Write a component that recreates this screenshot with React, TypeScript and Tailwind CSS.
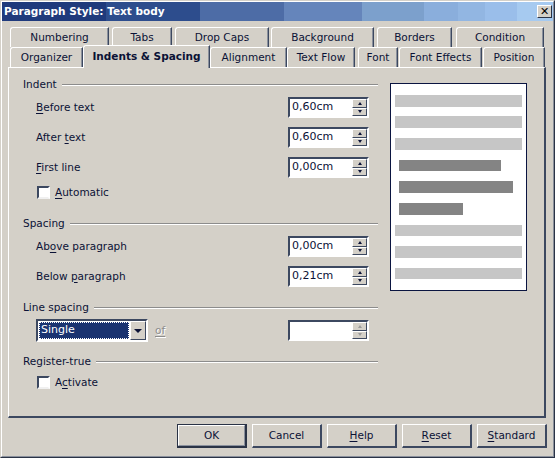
import React from 'react';

const ink = 'text-[#0b1236]';

function U({ children }: { children: React.ReactNode }) {
  return <span className="underline underline-offset-2 decoration-1">{children}</span>;
}

function Tab({ label, className }: { label: string; className: string }) {
  return (
    <div
      className={`h-[20px] shrink-0 flex items-center justify-center border-t border-l border-white border-r border-r-[#3c4860] rounded-tl-[3px] shadow-[inset_-1px_0_0_#8a909c] ${className}`}
    >
      {label}
    </div>
  );
}

function SectionHead({ title }: { title: string }) {
  return (
    <div className="h-[13px] flex items-center gap-[5px]">
      <span className="leading-none">{title}</span>
      <div className="flex-1 h-0 border-t border-[#8c8c8c] border-b border-b-white" />
    </div>
  );
}

function Arrow({ up, disabled }: { up?: boolean; disabled?: boolean }) {
  const c = disabled ? 'border-[#9a9a9a]' : 'border-[#0b1236]';
  return (
    <div className="flex-1 bg-[#d4d0c8] border border-white border-r-[#3c4860] border-b-[#3c4860] flex items-center justify-center">
      <div
        className={
          up
            ? `w-0 h-0 border-x-[2.5px] border-x-transparent border-b-[3px] border-t-0 ${c}`
            : `w-0 h-0 border-x-[2.5px] border-x-transparent border-t-[3px] border-b-0 ${c}`
        }
      />
    </div>
  );
}

function Spin({ value, disabled }: { value?: string; disabled?: boolean }) {
  return (
    <div className="w-[81px] h-[21px] shrink-0 flex border-2 border-t-[#3c4860] border-l-[#3c4860] border-r-white border-b-white bg-white">
      <div className="flex-1 pl-[2px] flex items-center text-[11px]">{value}</div>
      <div className="w-[15px] flex flex-col">
        <Arrow up disabled={disabled} />
        <Arrow disabled={disabled} />
      </div>
    </div>
  );
}

function Field({ label, value }: { label: React.ReactNode; value: string }) {
  return (
    <div className="flex items-center h-[21px]">
      <div className="w-[265px] pl-[13px]">{label}</div>
      <Spin value={value} />
    </div>
  );
}

function Check({ label }: { label: React.ReactNode }) {
  return (
    <div className="flex items-center h-[13px] pl-[14px] gap-[5px]">
      <div className="w-[13px] h-[13px] bg-white border-2 border-t-[#3c4860] border-l-[#3c4860] border-r-white border-b-[#f0f0f0]" />
      <span>{label}</span>
    </div>
  );
}

function Btn({ children, def }: { children: React.ReactNode; def?: boolean }) {
  if (def) {
    return (
      <div className="w-[70px] h-[24px] border border-[#2a3346] border-r-2 border-b-2">
        <div className="h-full border border-white border-r-[#8a909c] border-b-[#8a909c] flex items-center justify-center">
          {children}
        </div>
      </div>
    );
  }
  return (
    <div className="w-[70px] h-[24px] border border-white border-r-2 border-b-2 border-r-[#3c4860] border-b-[#3c4860] flex items-center justify-center">
      {children}
    </div>
  );
}

const previewLines = [
  { cls: 'mt-[11px] ml-[4px] w-[127px] h-[12px] bg-[#c6c6c6]' },
  { cls: 'mt-[9px] ml-[4px] w-[127px] h-[12px] bg-[#c6c6c6]' },
  { cls: 'mt-[10px] ml-[4px] w-[127px] h-[12px] bg-[#c6c6c6]' },
  { cls: 'mt-[10px] ml-[8px] w-[102px] h-[11px] bg-[#848484]' },
  { cls: 'mt-[10px] ml-[8px] w-[114px] h-[12px] bg-[#848484]' },
  { cls: 'mt-[10px] ml-[8px] w-[64px] h-[12px] bg-[#848484]' },
  { cls: 'mt-[10px] ml-[4px] w-[127px] h-[11px] bg-[#c6c6c6]' },
  { cls: 'mt-[10px] ml-[4px] w-[127px] h-[12px] bg-[#c6c6c6]' },
  { cls: 'mt-[10px] ml-[4px] w-[127px] h-[11px] bg-[#c6c6c6]' },
];

export default function App() {
  return (
    <div
      className={`w-[555px] h-[458px] bg-[#d4d0c8] border border-[#d4d0c8] border-r-[#2a3346] border-b-[#2a3346] font-['DejaVu_Sans',sans-serif] text-[10.5px] ${ink}`}
    >
      <div className="h-full flex flex-col border border-white border-r-[#8a909c] border-b-[#8a909c]">
        {/* title bar */}
        <div className="h-[19px] shrink-0 flex items-center justify-between pl-[2px] pr-[1px] bg-[linear-gradient(90deg,#1f3a7c_0px,#1f3a7c_104px,#2d4d8d_104px,#2d4d8d_198px,#4d6ca6_198px,#4d6ca6_282px,#6585bb_282px,#6585bb_360px,#7ca0cc_360px,#7ca0cc_422px,#8aaedc_422px,#8aaedc_456px,#92b6e2_456px,#92b6e2_483px,#9abeea_483px,#9abeea_515px,#a6caf0_515px)]">
          <span className="text-white font-bold text-[10.5px]">Paragraph Style: Text body</span>
          <div className="w-[15px] h-[13px] bg-[#d4d0c8] border border-white border-r-[#2a3346] border-b-[#2a3346] flex items-center justify-center text-[11px] font-bold leading-none text-black">
            ✕
          </div>
        </div>

        {/* tabs back row */}
        <div className="mt-[6px] ml-[8px] flex">
          <Tab label="Numbering" className="w-[99px]" />
          <Tab label="Tabs" className="w-[60px] ml-[3px]" />
          <Tab label="Drop Caps" className="w-[94px] ml-[3px]" />
          <Tab label="Background" className="w-[103px] ml-[2px]" />
          <Tab label="Borders" className="w-[75px] ml-[3px]" />
          <Tab label="Condition" className="w-[88px] ml-[4px]" />
        </div>

        {/* tabs front row */}
        <div className="ml-[8px] flex h-[20px] relative z-10">
          <Tab label="Organizer" className="w-[73px]" />
          <div className="w-[127px] h-[23px] -mt-[2px] shrink-0 flex items-center justify-center font-bold bg-[#d4d0c8] border-t border-l border-white border-r border-r-[#3c4860] rounded-tl-[3px] shadow-[inset_-1px_0_0_#8a909c]">
            Indents &amp; Spacing
          </div>
          <Tab label="Alignment" className="w-[77px]" />
          <Tab label="Text Flow" className="w-[68px]" />
          <Tab label="Font" className="w-[40px] ml-[3px]" />
          <Tab label="Font Effects" className="w-[83px] ml-[1px]" />
          <Tab label="Position" className="w-[62px] ml-[1px]" />
        </div>

        {/* panel */}
        <div className="ml-[6px] w-[538px] h-[351px] shrink-0 border border-white border-r-2 border-b-2 border-r-[#3c4860] border-b-[#3c4860] flex">
          <div className="w-[355px] ml-[14px] pt-[10px] flex flex-col">
            <SectionHead title="Indent" />
            <div className="mt-[6px] flex flex-col gap-[9px]">
              <Field label={<><U>B</U>efore text</>} value="0,60cm" />
              <Field label={<>After <U>t</U>ext</>} value="0,60cm" />
              <Field label={<><U>F</U>irst line</>} value="0,00cm" />
            </div>
            <div className="mt-[8px]">
              <Check label={<><U>A</U>utomatic</>} />
            </div>

            <div className="mt-[18px]">
              <SectionHead title="Spacing" />
            </div>
            <div className="mt-[6px] flex flex-col gap-[9px]">
              <Field label={<>Ab<U>o</U>ve paragraph</>} value="0,00cm" />
              <Field label={<>Below <U>p</U>aragraph</>} value="0,21cm" />
            </div>

            <div className="mt-[14px]">
              <SectionHead title="Line spacing" />
            </div>
            <div className="mt-[5px] flex items-center h-[23px]">
              <div className="w-[265px] pl-[13px] flex items-center">
                <div className="w-[112px] h-[23px] flex border-2 border-t-[#3c4860] border-l-[#3c4860] border-r-white border-b-white bg-white">
                  <div className="flex-1 m-[1px] bg-[#1a3370] outline outline-1 outline-dotted outline-white -outline-offset-1 text-white flex items-center pl-[2px] text-[11px]">
                    Single
                  </div>
                  <div className="w-[16px] bg-[#d4d0c8] border border-white border-r-[#3c4860] border-b-[#3c4860] flex items-center justify-center">
                    <div className="w-0 h-0 border-x-[4px] border-x-transparent border-t-[4px] border-t-[#0b1236]" />
                  </div>
                </div>
                <span className="ml-[7px] text-[#8c8c8c] underline underline-offset-2 [text-shadow:1px_1px_0_#ffffff]">of</span>
              </div>
              <Spin disabled />
            </div>

            <div className="mt-[13px]">
              <SectionHead title="Register-true" />
            </div>
            <div className="mt-[8px]">
              <Check label={<>A<U>c</U>tivate</>} />
            </div>
          </div>

          {/* preview */}
          <div className="ml-[12px] mt-[15px] w-[137px] h-[208px] bg-white border border-[#0a1440] flex flex-col">
            {previewLines.map((l, i) => (
              <div key={i} className={l.cls} />
            ))}
          </div>
        </div>

        {/* buttons */}
        <div className="mt-[6px] flex justify-end gap-[5px] pr-[6px]">
          <Btn def>OK</Btn>
          <Btn>Cancel</Btn>
          <Btn><U>H</U>elp</Btn>
          <Btn><U>R</U>eset</Btn>
          <Btn><U>S</U>tandard</Btn>
        </div>
      </div>
    </div>
  );
}
